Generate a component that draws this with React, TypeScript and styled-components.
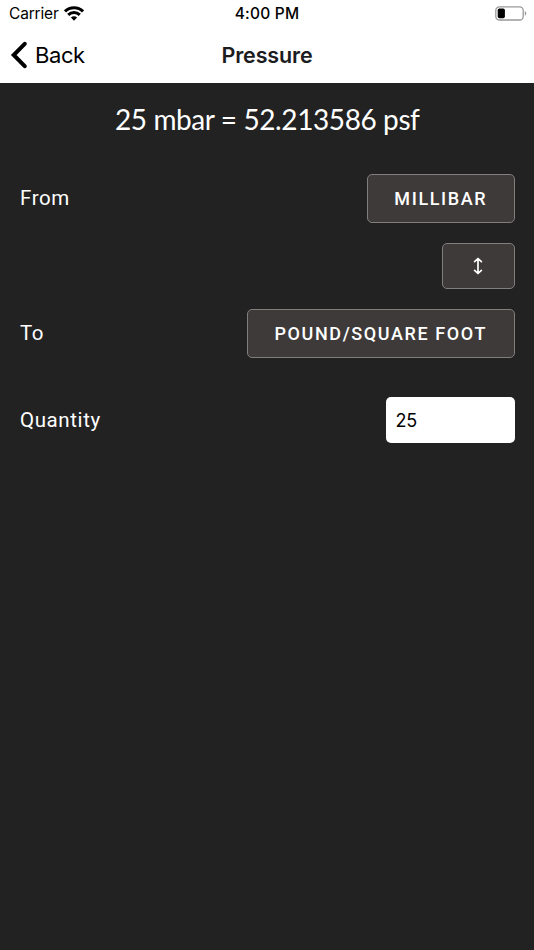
import React, { useState } from "react";
import styled, { createGlobalStyle } from "styled-components";

const GlobalStyle = createGlobalStyle`
  * { box-sizing: border-box; }
  html, body { margin: 0; background: #222222; }
`;

const Screen = styled.div`
  width: 100%;
  min-height: 100vh;
  display: flex;
  flex-direction: column;
  background: #222222;
  color: #ffffff;
  font-family: Roboto, sans-serif;
  overflow: hidden;
`;

const StatusBar = styled.div`
  height: 28px;
  display: grid;
  grid-template-columns: 1fr auto 1fr;
  align-items: center;
  padding: 0 7px 0 9px;
  background: #ffffff;
  color: #000000;
  font: 400 15.5px/28px Inter, sans-serif;
`;

const Carrier = styled.div`
  display: flex;
  align-items: center;
  gap: 5px;
  letter-spacing: -0.18px;

  svg {
    margin-bottom: 2px;
  }
`;

const Clock = styled.div`
  margin-right: 2px;
  font-weight: 500;
  letter-spacing: 0.2px;
`;

const BatterySlot = styled.div`
  display: flex;
  justify-content: flex-end;
  padding-bottom: 2px;
`;

const NavBar = styled.header`
  height: 55px;
  display: grid;
  grid-template-columns: 1fr auto 1fr;
  align-items: center;
  padding: 0 10px 1px;
  background: #ffffff;
  font-family: Inter, sans-serif;
`;

const BackButton = styled.button`
  display: flex;
  align-items: center;
  gap: 7px;
  border: 0;
  padding: 0;
  background: none;
  color: #000000;
  font: 400 22px/28px Inter, sans-serif;
  letter-spacing: -0.4px;

  svg {
    margin-bottom: 1px;
  }
`;

const Title = styled.h1`
  margin: 0;
  color: #1c1c1e;
  font-size: 21.5px;
  font-weight: 600;
  line-height: 28px;
  letter-spacing: -0.15px;
`;

const Content = styled.main`
  display: flex;
  flex-direction: column;
  padding: 0 19.5px 0 20px;
`;

const Result = styled.div`
  height: 73px;
  margin-bottom: 18px;
  text-align: center;
  font: 400 28px/73px Lato, sans-serif;
  letter-spacing: -0.4px;
`;

const Row = styled.div<{ $gap: number; $height: number }>`
  display: flex;
  align-items: center;
  justify-content: space-between;
  height: ${(p) => p.$height}px;
  margin-bottom: ${(p) => p.$gap}px;
`;

const Label = styled.label`
  padding-bottom: 1px;
  font-size: 20.5px;
  line-height: 28px;
  letter-spacing: 0.6px;
`;

const UnitButton = styled.button<{ $width: number }>`
  width: ${(p) => p.$width}px;
  height: 100%;
  display: flex;
  align-items: center;
  justify-content: center;
  margin-left: auto;
  padding: 0;
  border: 1px solid #827e7e;
  border-radius: 5px;
  background: #3e3a39;
  color: #ffffff;
  font: 500 18px/24px Roboto, sans-serif;
  letter-spacing: 1.6px;
  white-space: nowrap;
`;

const QuantityInput = styled.input`
  width: 129px;
  height: 100%;
  padding: 0 10px;
  border: 0;
  border-radius: 5px;
  outline: none;
  background: #ffffff;
  color: #000000;
  font: 400 18px/24px Inter, sans-serif;
  letter-spacing: -0.3px;
`;

const WifiIcon = () => (
  <svg width="20" height="15" viewBox="0 0 20 15" fill="none" stroke="#000" strokeWidth="3">
    <path d="M1 5.4C6 .5 14 .5 19 5.4" />
    <path d="M4.2 8.9c3.3-3.1 8.3-3.1 11.6 0" />
    <path d="M6.9 11.4c1.8-1.5 4.4-1.5 6.2 0L10 14.7z" fill="#000" stroke="none" />
  </svg>
);

const BatteryIcon = () => (
  <svg width="32" height="15" viewBox="0 0 32 15">
    <rect x=".8" y=".8" width="27.4" height="13.2" rx="3.6" fill="#fff" stroke="#999" strokeWidth="1.3" />
    <rect x="2.7" y="2.5" width="7.2" height="9.8" rx="1.7" fill="#000" />
    <path d="M29.8 5.1c2 1 2 3.7 0 4.7z" fill="#999" />
  </svg>
);

const BackIcon = () => (
  <svg width="18" height="28" viewBox="0 0 18 28" fill="none" stroke="#000" strokeWidth="4" strokeLinecap="round" strokeLinejoin="miter">
    <path d="M14.7 2.8 3.7 14l11 11.2" />
  </svg>
);

const SwapIcon = () => (
  <svg width="10" height="18" viewBox="0 0 10 18" fill="none" stroke="#fff" strokeWidth="1.7" strokeLinecap="round" strokeLinejoin="round">
    <path d="M5 1.8v14.4M1.6 4.7 5 1.5l3.4 3.2M1.6 13.3 5 16.5l3.4-3.2" />
  </svg>
);

export default function App() {
  const [quantity, setQuantity] = useState("25");
  return (
    <Screen>
      <GlobalStyle />
      <StatusBar>
        <Carrier>Carrier <WifiIcon /></Carrier>
        <Clock>4:00 PM</Clock>
        <BatterySlot><BatteryIcon /></BatterySlot>
      </StatusBar>
      <NavBar>
        <BackButton><BackIcon />Back</BackButton>
        <Title>Pressure</Title>
      </NavBar>
      <Content>
        <Result>25 mbar = 52.213586 psf</Result>
        <Row $height={49} $gap={20}>
          <Label>From</Label>
          <UnitButton $width={147.5}>MILLIBAR</UnitButton>
        </Row>
        <Row $height={46} $gap={20}>
          <UnitButton $width={72.5} aria-label="Swap units"><SwapIcon /></UnitButton>
        </Row>
        <Row $height={49} $gap={39}>
          <Label>To</Label>
          <UnitButton $width={267.5}>POUND/SQUARE FOOT</UnitButton>
        </Row>
        <Row $height={46} $gap={0}>
          <Label htmlFor="quantity">Quantity</Label>
          <QuantityInput id="quantity" value={quantity} onChange={(e) => setQuantity(e.target.value)} />
        </Row>
      </Content>
    </Screen>
  );
}
